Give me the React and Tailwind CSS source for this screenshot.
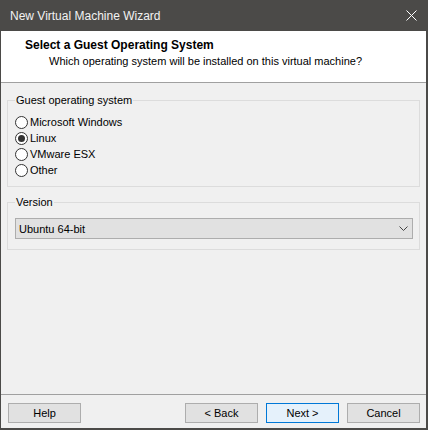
import { useState } from 'react';

const font = { fontFamily: '"Liberation Sans", Arial, sans-serif' };

const osOptions = ['Microsoft Windows', 'Linux', 'VMware ESX', 'Other'];

const Radio = ({ label, checked, onSelect }) => (
  <label className="flex h-[16px] cursor-default items-center" onClick={onSelect}>
    <span className="flex h-[13px] w-[13px] items-center justify-center rounded-full border border-[#333333] bg-white">
      {checked && <span className="h-[7px] w-[7px] rounded-full bg-[#333333]" />}
    </span>
    <span className="ml-[2px]">{label}</span>
  </label>
);

const Button = ({ children, primary }) => (
  <button
    className={
      primary
        ? 'h-[20px] w-[73px] border border-[#0078d7] bg-[#e5f1fb] text-black'
        : 'h-[20px] w-[73px] border border-[#adadad] bg-[#e1e1e1] text-black'
    }
  >
    {children}
  </button>
);

export default function App() {
  const [os, setOs] = useState('Linux');

  return (
    <div
      className="flex h-[430px] w-[428px] flex-col border-b-2 border-l border-r-2 border-[#4b4a48] bg-[#f0f0f0] text-[11px] leading-[14px] text-black"
      style={font}
    >
      {/* Title bar */}
      <div className="flex h-[31px] shrink-0 items-center justify-between bg-[#4b4a48] pl-[9px] pr-[9px]">
        <span className="text-[12px] text-[#f2f2f2]">New Virtual Machine Wizard</span>
        <svg width="11" height="11" viewBox="0 0 11 11">
          <path d="M0.5 0.5 L10.5 10.5 M10.5 0.5 L0.5 10.5" stroke="#ffffff" strokeWidth="1" />
        </svg>
      </div>

      {/* Header */}
      <div className="h-[52px] shrink-0 border-b border-[#a0a0a0] bg-white pl-[24px] pt-[6px]">
        <p className="text-[12px] font-bold leading-[16px]">Select a Guest Operating System</p>
        <p className="ml-[24px] text-[11px] leading-[16px]">
          Which operating system will be installed on this virtual machine?
        </p>
      </div>

      {/* Body */}
      <div className="flex flex-1 flex-col px-[6px]">
        <fieldset className="mt-[10px] border border-[#dcdcdc] pb-[8px] pl-[7px]">
          <legend className="px-[1px]">Guest operating system</legend>
          <div className="flex flex-col pt-[7px]">
            {osOptions.map(o => (
              <Radio key={o} label={o} checked={os === o} onSelect={() => setOs(o)} />
            ))}
          </div>
        </fieldset>

        <fieldset className="mt-[8px] border border-[#dcdcdc] pb-[10px] pl-[7px] pr-[6px]">
          <legend className="px-[1px]">Version</legend>
          <div className="pt-[9px]">
            <div className="flex h-[21px] items-center justify-between border border-[#adadad] bg-[#e1e1e1] pl-[3px] pr-[4px]">
              <span>Ubuntu 64-bit</span>
              <svg width="9" height="5" viewBox="0 0 9 5">
                <path d="M0.5 0.5 L4.5 4.5 L8.5 0.5" fill="none" stroke="#444444" strokeWidth="1" />
              </svg>
            </div>
          </div>
        </fieldset>
      </div>

      {/* Footer */}
      <div className="flex shrink-0 items-center justify-between border-t border-[#a0a0a0] pb-[5px] pl-[7px] pr-[6px] pt-[8px]">
        <Button>Help</Button>
        <div className="flex gap-[8px]">
          <Button>&lt; Back</Button>
          <Button primary>Next &gt;</Button>
          <Button>Cancel</Button>
        </div>
      </div>
    </div>
  );
}
